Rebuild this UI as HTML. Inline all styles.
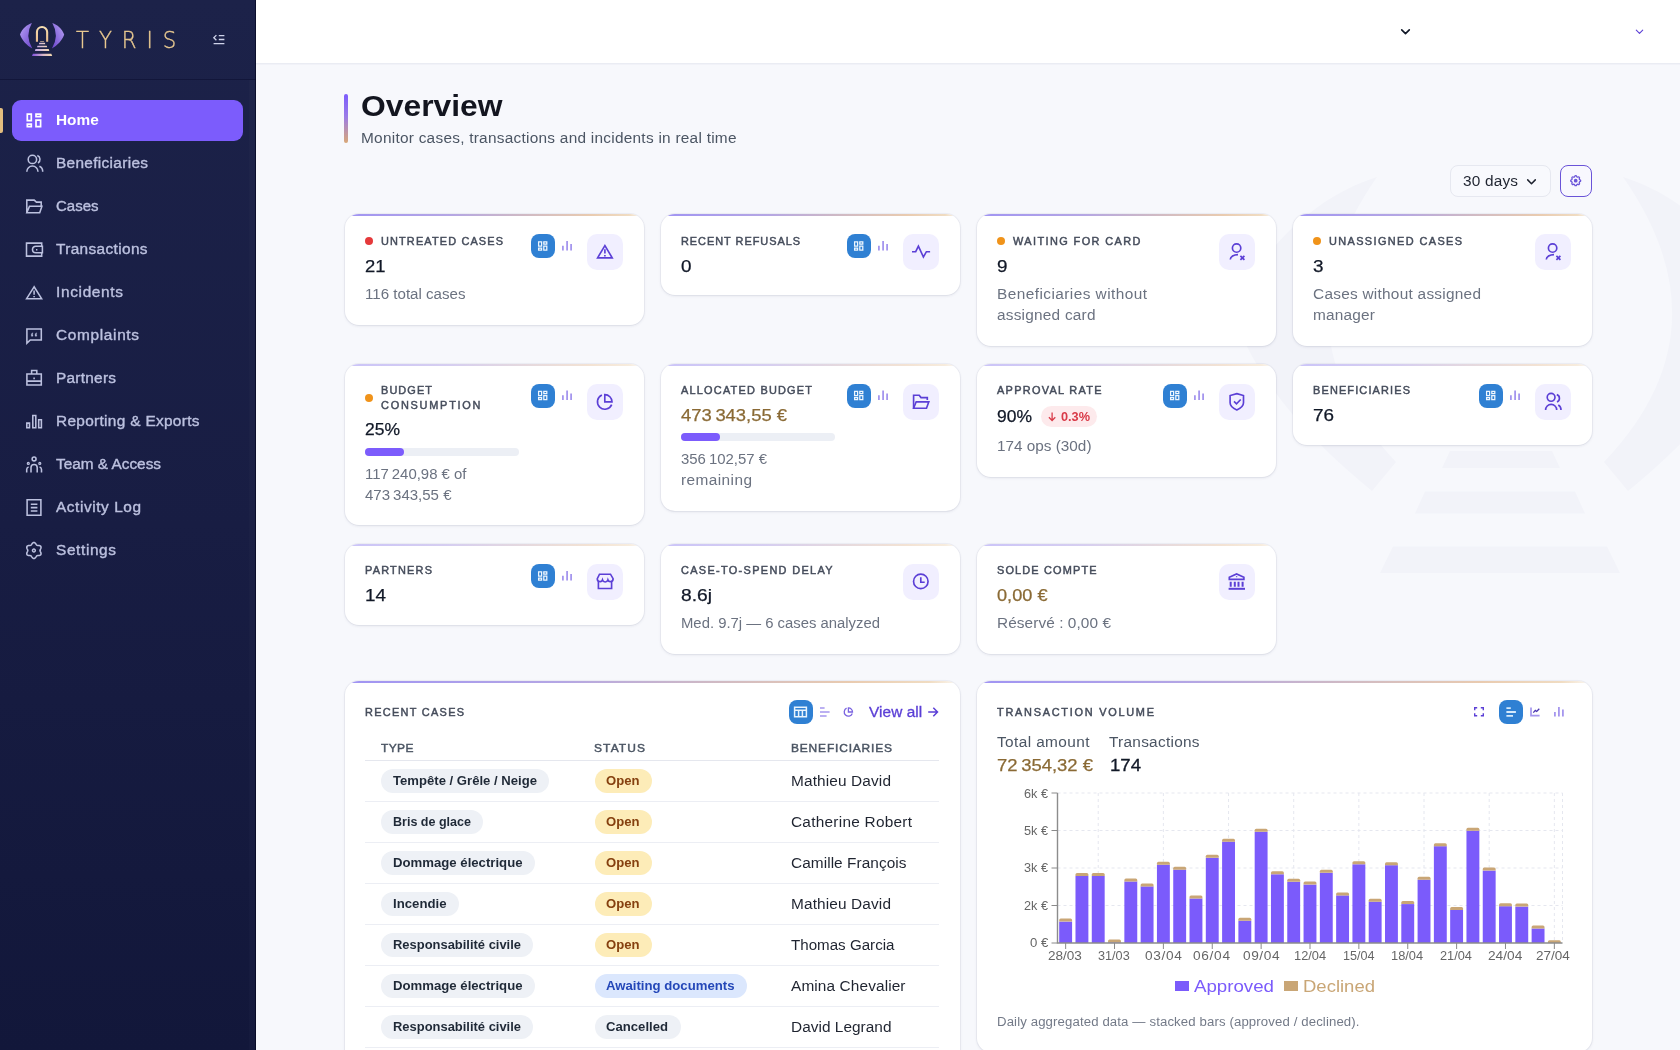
<!DOCTYPE html>
<html lang="en"><head><meta charset="utf-8"><title>Tyris — Overview</title>
<style>
html,body{margin:0;padding:0}
body{width:1680px;height:1050px;overflow:hidden;position:relative;background:#f7f8fc;font-family:"Liberation Sans",sans-serif}
.t{position:absolute;white-space:pre;display:block}
.card{position:absolute;background:#fff;border-radius:14px;overflow:hidden;box-shadow:0 1px 3px rgba(30,35,80,.10),0 0 0 1px rgba(30,35,80,.04)}
.card:before{content:"";position:absolute;left:0;right:0;top:0;height:2px;background:linear-gradient(90deg,#a094f3 0%,#b4a6e4 35%,#cdb8c6 58%,#e9cbb0 82%,#f0dcc2 95%,rgba(240,224,200,.2) 100%)}
.card.dim:before{opacity:.55}
svg{position:absolute;overflow:visible}
#tx{position:absolute;left:0;top:0;width:1680px;height:1050px;will-change:transform}
</style></head><body>
<div style="position:absolute;left:0px;top:0px;width:256px;height:1050px;background:linear-gradient(180deg,#1c2249 0%,#181d43 50%,#12173a 100%)"></div>
<div style="position:absolute;left:0px;top:79px;width:256px;height:1px;background:#12163a"></div>
<div style="position:absolute;left:249px;top:80px;width:6px;height:970px;background:rgba(255,255,255,.014)"></div>
<div style="position:absolute;left:255px;top:0px;width:1px;height:1050px;background:rgba(2,4,26,.6)"></div>
<div style="position:absolute;left:12px;top:100px;width:231px;height:41px;background:#7c5cfc;border-radius:9px"></div>
<div style="position:absolute;left:0px;top:108px;width:3px;height:25px;background:#e2bd7e;border-radius:0 2px 2px 0"></div>
<svg style="left:0;top:0" width="1680" height="1050" viewBox="0 0 1680 1050"><path d="M27.300 114.200h4v6.400h-4z M27.300 124.100h4v2.600h-4z M36 114.200h4.600v2.500h-4.600z M36 120.200h4.600v6.500h-4.600z" fill="none" stroke="#ffffff" stroke-width="1.7" /></svg>
<svg style="left:0;top:0" width="1680" height="1050" viewBox="0 0 1680 1050"><path d="M36.600 159.400a4.200 4.200 0 1 1-8.400 0a4.200 4.200 0 1 1 8.400 0z M26.800 171.700a5.600 5.600 0 0 1 11.200 0 M37.300 155.500a4.200 4.200 0 0 1 0.700 7.500 M39.400 166.300a5.600 5.600 0 0 1 3.300 5.400" fill="none" stroke="#bcc1df" stroke-width="1.55" /></svg>
<svg style="left:0;top:0" width="1680" height="1050" viewBox="0 0 1680 1050"><path d="M26.800 212.800V200.100h7.400l2.200 2h4.800v3.400 M26.800 212.800l2.700-6.500h12.400l-2.200 6.500z" fill="none" stroke="#bcc1df" stroke-width="1.55" /></svg>
<svg style="left:0;top:0" width="1680" height="1050" viewBox="0 0 1680 1050"><path d="M41.700 246v-2.900h-15.200v13h15.200v-2.900 M42.400 246.200h-6.600a3.300 3.300 0 0 0 0 6.600h6.600z" fill="none" stroke="#bcc1df" stroke-width="1.55" /></svg>
<svg style="left:0;top:0" width="1680" height="1050" viewBox="0 0 1680 1050"><path d="M36 249.700h1.400" fill="none" stroke="#bcc1df" stroke-width="1.5" /></svg>
<svg style="left:0;top:0" width="1680" height="1050" viewBox="0 0 1680 1050"><path d="M34.100 286.800L26.600 298.700h15z M34.100 290.600v4.200 M34.100 296v1.300" fill="none" stroke="#bcc1df" stroke-width="1.55" /></svg>
<svg style="left:0;top:0" width="1680" height="1050" viewBox="0 0 1680 1050"><path d="M26.900 328.900h14.400v11h-11l-3.400 3.200z" fill="none" stroke="#bcc1df" stroke-width="1.55" /></svg>
<svg style="left:0;top:0" width="1680" height="1050" viewBox="0 0 1680 1050"><path d="M31.300 336.200v-1.600q0-1.500 1.600-1.900v.9q-.7.300-.7 1h.7v1.600z M35.100 336.200v-1.600q0-1.500 1.600-1.900v.9q-.7.300-.7 1h.7v1.600z" fill="#bcc1df" stroke="#bcc1df" stroke-width="0.3" /></svg>
<svg style="left:0;top:0" width="1680" height="1050" viewBox="0 0 1680 1050"><path d="M26.900 373.900h14.400v11h-14.400z M31.600 373.900v-3.400h5.200v3.400 M26.900 381.100h14.400 M34.100 377.400v1.800" fill="none" stroke="#bcc1df" stroke-width="1.55" /></svg>
<svg style="left:0;top:0" width="1680" height="1050" viewBox="0 0 1680 1050"><path d="M26.800 423.100h2.700v4.700h-2.700z M32.800 415.400h3v12.400h-3z M38.700 419.700h2.700v8.100h-2.700z" fill="none" stroke="#bcc1df" stroke-width="1.55" /></svg>
<svg style="left:0;top:0" width="1680" height="1050" viewBox="0 0 1680 1050"><path d="M36.050 458.900a1.950 1.950 0 1 1-3.900 0a1.950 1.950 0 1 1 3.900 0z M31 472.600v-5a3.100 3.100 0 0 1 6.200 0v5 M26.700 472.600v-3.200a2.600 2.600 0 0 1 1.900-2.500 M41.500 472.600v-3.200a2.600 2.600 0 0 0-1.900-2.500" fill="none" stroke="#bcc1df" stroke-width="1.55" /></svg>
<svg style="left:0;top:0" width="1680" height="1050" viewBox="0 0 1680 1050"><path d="M29.300 463.400a1 1 0 1 1-2 0a1 1 0 1 1 2 0z M40.800 463.400a1 1 0 1 1-2 0a1 1 0 1 1 2 0z" fill="none" stroke="#bcc1df" stroke-width="1.2" /></svg>
<svg style="left:0;top:0" width="1680" height="1050" viewBox="0 0 1680 1050"><path d="M27.100 499.800h13.800v15.400h-13.800z M30.800 504.300h6.600M30.800 507.600h6.600M30.800 511h6.600" fill="none" stroke="#bcc1df" stroke-width="1.55" /></svg>
<svg style="left:0;top:0" width="1680" height="1050" viewBox="0 0 1680 1050"><path d="M40.00 550.50L40.04 550.82L40.15 551.16L40.31 551.52L40.51 551.90L40.71 552.32L40.88 552.77L41.00 553.23L41.04 553.68L40.99 554.11L40.83 554.50L40.57 554.83L40.23 555.10L39.81 555.29L39.36 555.41L38.89 555.49L38.42 555.52L37.99 555.54L37.59 555.58L37.25 555.65L36.95 555.78L36.69 555.98L36.45 556.24L36.23 556.56L35.99 556.93L35.72 557.31L35.43 557.68L35.09 558.01L34.72 558.28L34.32 558.44L33.90 558.50L33.48 558.44L33.08 558.28L32.71 558.01L32.37 557.68L32.08 557.31L31.81 556.93L31.57 556.56L31.35 556.24L31.11 555.98L30.85 555.78L30.55 555.65L30.21 555.58L29.81 555.54L29.38 555.52L28.91 555.49L28.44 555.41L27.99 555.29L27.57 555.10L27.23 554.83L26.97 554.50L26.81 554.11L26.76 553.68L26.80 553.23L26.92 552.77L27.09 552.32L27.29 551.90L27.49 551.52L27.65 551.16L27.76 550.82L27.80 550.50L27.76 550.18L27.65 549.84L27.49 549.48L27.29 549.10L27.09 548.68L26.92 548.23L26.80 547.77L26.76 547.32L26.81 546.89L26.97 546.50L27.23 546.17L27.57 545.90L27.99 545.71L28.44 545.59L28.91 545.51L29.38 545.48L29.81 545.46L30.21 545.42L30.55 545.35L30.85 545.22L31.11 545.02L31.35 544.76L31.57 544.44L31.81 544.07L32.08 543.69L32.37 543.32L32.71 542.99L33.08 542.72L33.48 542.56L33.90 542.50L34.32 542.56L34.72 542.72L35.09 542.99L35.43 543.32L35.72 543.69L35.99 544.07L36.23 544.44L36.45 544.76L36.69 545.02L36.95 545.22L37.25 545.35L37.59 545.42L37.99 545.46L38.42 545.48L38.89 545.51L39.36 545.59L39.81 545.71L40.23 545.90L40.57 546.17L40.83 546.50L40.99 546.89L41.04 547.32L41.00 547.77L40.88 548.23L40.71 548.68L40.51 549.10L40.31 549.48L40.15 549.84L40.04 550.18Z M35.300 550.500a1.400 1.400 0 1 1-2.800 0a1.400 1.400 0 1 1 2.800 0z" fill="none" stroke="#bcc1df" stroke-width="1.55" /></svg>
<svg style="left:0;top:0" width="256" height="80" viewBox="0 0 256 80">
<defs><linearGradient id="lgp" x1="0" y1="0" x2="1" y2="1"><stop offset="0" stop-color="#b9a4f4"/><stop offset="1" stop-color="#6a43cc"/></linearGradient>
<linearGradient id="lgp2" x1="1" y1="0" x2="0" y2="1"><stop offset="0" stop-color="#b9a4f4"/><stop offset="1" stop-color="#6a43cc"/></linearGradient>
<linearGradient id="lgg" x1="0" y1="0" x2="0" y2="1"><stop offset="0" stop-color="#f8e0b2"/><stop offset="1" stop-color="#e9bb8c"/></linearGradient>
<linearGradient id="lgs" x1="0" y1="0" x2="1" y2="0"><stop offset="0" stop-color="#c3a8ee"/><stop offset="1" stop-color="#f7ddb0"/></linearGradient>
<linearGradient id="lgs2" x1="0" y1="0" x2="1" y2="0"><stop offset="0" stop-color="#7f4fe0"/><stop offset=".55" stop-color="#d9b6c8"/><stop offset="1" stop-color="#f7ddb0"/></linearGradient></defs>
<path d="M31.900 23C27 24.500 22 29 20 34.500C22 40.500 27 45.500 32.300 48.500Q24.600 35.500 31.900 23Z" fill="url(#lgp)"/>
<path d="M52.300 23C57.200 24.500 62.200 29 64.200 34.500C62.200 40.500 57.200 45.500 51.900 48.500Q59.600 35.500 52.300 23Z" fill="url(#lgp2)"/>
<path d="M36.950 41.800V32.050A5.100 5.100 0 0 1 47.150 32.050V41.800" fill="none" stroke="url(#lgg)" stroke-width="2.100"/>
<path d="M40.300 41h3.600l.3 1.100h-4.200z" fill="#cdb39a" opacity=".75"/>
<path d="M39.300 42.800h5.600l.4 1.400h-6.400z M37.500 45.800h9.200l.5 1.500h-10.200z M35.500 49h13.200l.6 1.900h-14.400z" fill="url(#lgs)"/>
<path d="M32.900 53.800h18.400l.9 2.300h-20.200z" fill="url(#lgs2)"/></svg>
<svg style="left:0;top:0" width="1680" height="1050" viewBox="0 0 1680 1050"><path d="M218.800 35.700h5.600M218.800 39.500h5.600M213.600 43.700h10.800M216.400 35.100l-2.600 2.600 2.600 2.600" fill="none" stroke="#cfd3ea" stroke-width="1.3" /></svg>
<div style="position:absolute;left:256px;top:0px;width:1424px;height:63px;background:#fff"></div>
<div style="position:absolute;left:256px;top:63px;width:1424px;height:1px;background:#eaecf3"></div>
<div style="position:absolute;left:256px;top:64px;width:1424px;height:1px;background:#f1f2f8"></div>
<svg style="left:1399px;top:25px" width="13" height="13" viewBox="0 0 24 24" fill="none" stroke="#111827" stroke-width="3.0" stroke-linejoin="round" stroke-linecap="round"><path d="M5 9l7 7 7-7"/></svg>
<svg style="left:1634px;top:26px" width="11" height="11" viewBox="0 0 24 24" fill="none" stroke="#5b3fd6" stroke-width="2.4" stroke-linejoin="round" stroke-linecap="round"><path d="M5 9l7 7 7-7"/></svg>
<svg style="left:0;top:0" width="1680" height="1050" viewBox="0 0 1680 1050" fill="#f2f3f9">
<path d="M1377 177C1318 195 1258 249 1234 315C1258 387 1318 447 1372 491L1396 462Q1270 330 1377 177Z"/>
<path d="M1623 177C1682 195 1742 249 1766 315C1742 387 1682 447 1628 491L1604 462Q1730 330 1623 177Z"/>
<path d="M1450 451h102l8 17h-118z M1425 491.500h150l10 22h-170z M1393 546.500h214l13 26.500h-240z"/>
</svg>
<div style="position:absolute;left:344px;top:94px;width:4px;height:49px;border-radius:2px;background:linear-gradient(180deg,#7c5cfc 0%,#9a7be8 45%,#d9a877 100%)"></div>
<div style="position:absolute;left:1450px;top:165px;width:101px;height:32px;box-sizing:border-box;border:1px solid #e6e8f0;border-radius:8px;background:#f8f9fd"></div>
<svg style="left:1525px;top:174.5px" width="13" height="13" viewBox="0 0 24 24" fill="none" stroke="#1f2430" stroke-width="2.8" stroke-linejoin="round" stroke-linecap="round"><path d="M5 9l7 7 7-7"/></svg>
<div style="position:absolute;left:1560px;top:165px;width:32px;height:32px;box-sizing:border-box;border:1px solid #6a54d8;border-radius:8px;background:#f8f8fe"></div>
<svg style="left:1569.3px;top:174.3px" width="13.4" height="13.4" viewBox="0 0 24 24" fill="none" stroke="#6a54d8" stroke-width="2.3" stroke-linejoin="miter" stroke-linecap="butt"><path d="M10.325 4.317c.426-1.756 2.924-1.756 3.35 0a1.724 1.724 0 0 0 2.573 1.066c1.543-.94 3.31.826 2.37 2.37a1.724 1.724 0 0 0 1.065 2.572c1.756.426 1.756 2.924 0 3.35a1.724 1.724 0 0 0-1.066 2.573c.94 1.543-.826 3.31-2.37 2.37a1.724 1.724 0 0 0-2.572 1.065c-.426 1.756-2.924 1.756-3.35 0a1.724 1.724 0 0 0-2.573-1.066c-1.543.94-3.31-.826-2.37-2.37a1.724 1.724 0 0 0-1.065-2.572c-1.756-.426-1.756-2.924 0-3.35a1.724 1.724 0 0 0 1.066-2.573c-.94-1.543.826-3.31 2.37-2.37c1 .608 2.296.07 2.572-1.065z"/><circle cx="12" cy="12" r="2.2" fill="#6a54d8"/></svg>
<div class="card" style="left:344.5px;top:214px;width:299px;height:110.5px"></div>
<div style="position:absolute;left:365px;top:237px;width:8px;height:8px;border-radius:50%;background:#e5393b"></div>
<div style="position:absolute;left:587px;top:234px;width:36px;height:36px;background:#f1efff;border-radius:10px"></div>
<svg style="left:587px;top:234px" width="36" height="36" viewBox="0 0 36 36" fill="none" stroke="#5b3fd6" stroke-width="1.65" stroke-linejoin="miter" stroke-linecap="butt"><path d="M17.9 11.6L10.6 23.8H25.2z"/><path d="M17.9 15.2v4.200M17.900 20.900v1.500"/></svg>
<div style="position:absolute;left:531px;top:234px;width:24px;height:24px;background:#2f80d3;border-radius:8px;box-shadow:0 0 0 3px rgba(255,255,255,.6)"></div>
<svg style="left:0;top:0" width="1680" height="1050" viewBox="0 0 1680 1050"><path d="M538.6 241.8h3v4.200h-3z M538.6 248h3v2.200h-3z M543.8 241.8h3v2.200h-3z M543.8 246h3v4.200h-3z" fill="none" stroke="#eef6fe" stroke-width="1.25" /></svg>
<svg style="left:0;top:0" width="1680" height="1050" viewBox="0 0 1680 1050"><path d="M562.9 250.4V245.7M567.1 250.4V241.1M571.1 250.4V243.9" fill="none" stroke="#a596ee" stroke-width="1.8" /></svg>
<div class="card" style="left:660.5px;top:214px;width:299px;height:80.5px"></div>
<div style="position:absolute;left:903px;top:234px;width:36px;height:36px;background:#f1efff;border-radius:10px"></div>
<svg style="left:903px;top:234px" width="36" height="36" viewBox="0 0 36 36" fill="none" stroke="#5b3fd6" stroke-width="1.65" stroke-linejoin="miter" stroke-linecap="butt"><path d="M9 17.7h3.700l2.700-5.500 5 10.800 3-5.300h3.700"/></svg>
<div style="position:absolute;left:847px;top:234px;width:24px;height:24px;background:#2f80d3;border-radius:8px;box-shadow:0 0 0 3px rgba(255,255,255,.6)"></div>
<svg style="left:0;top:0" width="1680" height="1050" viewBox="0 0 1680 1050"><path d="M854.6 241.8h3v4.200h-3z M854.6 248h3v2.200h-3z M859.8 241.8h3v2.200h-3z M859.8 246h3v4.200h-3z" fill="none" stroke="#eef6fe" stroke-width="1.25" /></svg>
<svg style="left:0;top:0" width="1680" height="1050" viewBox="0 0 1680 1050"><path d="M878.9 250.4V245.7M883.1 250.4V241.1M887.1 250.4V243.9" fill="none" stroke="#a596ee" stroke-width="1.8" /></svg>
<div class="card" style="left:976.5px;top:214px;width:299px;height:131.5px"></div>
<div style="position:absolute;left:997px;top:237px;width:8px;height:8px;border-radius:50%;background:#f0931a"></div>
<div style="position:absolute;left:1219px;top:234px;width:36px;height:36px;background:#f1efff;border-radius:10px"></div>
<svg style="left:1219px;top:234px" width="36" height="36" viewBox="0 0 36 36" fill="none" stroke="#5b3fd6" stroke-width="1.65" stroke-linejoin="miter" stroke-linecap="butt"><circle cx="17.600" cy="14" r="4.200"/><path d="M11.300 25.600A7.600 5 0 0 1 19 20.600"/><path d="M21.400 21.900l4 4M25.400 21.900l-4 4" stroke-width="1.700"/></svg>
<div class="card" style="left:1292.5px;top:214px;width:299px;height:131.5px"></div>
<div style="position:absolute;left:1313px;top:237px;width:8px;height:8px;border-radius:50%;background:#f0931a"></div>
<div style="position:absolute;left:1535px;top:234px;width:36px;height:36px;background:#f1efff;border-radius:10px"></div>
<svg style="left:1535px;top:234px" width="36" height="36" viewBox="0 0 36 36" fill="none" stroke="#5b3fd6" stroke-width="1.65" stroke-linejoin="miter" stroke-linecap="butt"><circle cx="17.600" cy="14" r="4.200"/><path d="M11.300 25.600A7.600 5 0 0 1 19 20.600"/><path d="M21.400 21.900l4 4M25.400 21.900l-4 4" stroke-width="1.700"/></svg>
<div class="card dim" style="left:344.5px;top:364px;width:299px;height:160.5px"></div>
<div style="position:absolute;left:365px;top:394px;width:8px;height:8px;border-radius:50%;background:#f0931a"></div>
<div style="position:absolute;left:587px;top:383.5px;width:36px;height:36px;background:#f1efff;border-radius:10px"></div>
<svg style="left:587px;top:383.5px" width="36" height="36" viewBox="0 0 36 36" fill="none" stroke="#5b3fd6" stroke-width="1.65" stroke-linejoin="miter" stroke-linecap="butt"><path d="M17.8 17.8V10.6A7.2 7.2 0 0 1 25 17.8z"/><path d="M14.9 11A7.4 7.4 0 1 0 24.7 20.600"/></svg>
<div style="position:absolute;left:531px;top:383.5px;width:24px;height:24px;background:#2f80d3;border-radius:8px;box-shadow:0 0 0 3px rgba(255,255,255,.6)"></div>
<svg style="left:0;top:0" width="1680" height="1050" viewBox="0 0 1680 1050"><path d="M538.6 391.3h3v4.200h-3z M538.6 397.5h3v2.200h-3z M543.8 391.3h3v2.200h-3z M543.8 395.5h3v4.200h-3z" fill="none" stroke="#eef6fe" stroke-width="1.25" /></svg>
<svg style="left:0;top:0" width="1680" height="1050" viewBox="0 0 1680 1050"><path d="M562.9 399.9V395.2M567.1 399.9V390.6M571.1 399.9V393.4" fill="none" stroke="#a596ee" stroke-width="1.8" /></svg>
<div style="position:absolute;left:365px;top:448px;width:154px;height:8px;background:#eceff5;border-radius:4px"></div>
<div style="position:absolute;left:365px;top:448px;width:38.5px;height:8px;background:#7c5cfc;border-radius:4px"></div>
<div class="card dim" style="left:660.5px;top:364px;width:299px;height:146.5px"></div>
<div style="position:absolute;left:903px;top:383.5px;width:36px;height:36px;background:#f1efff;border-radius:10px"></div>
<svg style="left:903px;top:383.5px" width="36" height="36" viewBox="0 0 36 36" fill="none" stroke="#5b3fd6" stroke-width="1.65" stroke-linejoin="miter" stroke-linecap="butt"><path d="M10.600 24.200V11.200h5.600l1.800 2.400h6.300v2.400"/><path d="M10.600 24.200l2.600-6.400h12.600l-2.300 6.400z"/></svg>
<div style="position:absolute;left:847px;top:383.5px;width:24px;height:24px;background:#2f80d3;border-radius:8px;box-shadow:0 0 0 3px rgba(255,255,255,.6)"></div>
<svg style="left:0;top:0" width="1680" height="1050" viewBox="0 0 1680 1050"><path d="M854.6 391.3h3v4.200h-3z M854.6 397.5h3v2.200h-3z M859.8 391.3h3v2.200h-3z M859.8 395.5h3v4.200h-3z" fill="none" stroke="#eef6fe" stroke-width="1.25" /></svg>
<svg style="left:0;top:0" width="1680" height="1050" viewBox="0 0 1680 1050"><path d="M878.9 399.9V395.2M883.1 399.9V390.6M887.1 399.9V393.4" fill="none" stroke="#a596ee" stroke-width="1.8" /></svg>
<div style="position:absolute;left:681px;top:433px;width:154px;height:8px;background:#eceff5;border-radius:4px"></div>
<div style="position:absolute;left:681px;top:433px;width:38.5px;height:8px;background:#7c5cfc;border-radius:4px"></div>
<div class="card dim" style="left:976.5px;top:364px;width:299px;height:112.5px"></div>
<div style="position:absolute;left:1219px;top:383.5px;width:36px;height:36px;background:#f1efff;border-radius:10px"></div>
<svg style="left:1219px;top:383.5px" width="36" height="36" viewBox="0 0 36 36" fill="none" stroke="#5b3fd6" stroke-width="1.65" stroke-linejoin="miter" stroke-linecap="butt"><path d="M17.800 9.600l6.700 1.900v7.300c0 3.200-2.700 5.400-6.700 7.100-4-1.700-6.700-3.900-6.700-7.100v-7.300z"/><path d="M15 17.400l2.500 2.500 4.200-4.400"/></svg>
<div style="position:absolute;left:1163px;top:383.5px;width:24px;height:24px;background:#2f80d3;border-radius:8px;box-shadow:0 0 0 3px rgba(255,255,255,.6)"></div>
<svg style="left:0;top:0" width="1680" height="1050" viewBox="0 0 1680 1050"><path d="M1170.6 391.3h3v4.200h-3z M1170.6 397.5h3v2.200h-3z M1175.8 391.3h3v2.200h-3z M1175.8 395.5h3v4.200h-3z" fill="none" stroke="#eef6fe" stroke-width="1.25" /></svg>
<svg style="left:0;top:0" width="1680" height="1050" viewBox="0 0 1680 1050"><path d="M1194.9 399.9V395.2M1199.1 399.9V390.6M1203.1 399.9V393.4" fill="none" stroke="#a596ee" stroke-width="1.8" /></svg>
<div style="position:absolute;left:1041px;top:406px;width:56px;height:21px;background:#fdeaec;border-radius:10.500px"></div>
<svg style="left:0;top:0" width="1680" height="1050" viewBox="0 0 1680 1050"><path d="M1052.1 412.600v7.700 M1048.9 417.300l3.200 3.200 3.200-3.200" fill="none" stroke="#d93a48" stroke-width="1.3" /></svg>
<div class="card dim" style="left:1292.5px;top:364px;width:299px;height:80.5px"></div>
<div style="position:absolute;left:1535px;top:383.5px;width:36px;height:36px;background:#f1efff;border-radius:10px"></div>
<svg style="left:1535px;top:383.5px" width="36" height="36" viewBox="0 0 36 36" fill="none" stroke="#5b3fd6" stroke-width="1.65" stroke-linejoin="miter" stroke-linecap="butt"><circle cx="16.100" cy="13.300" r="3.900"/><path d="M10.600 26a5.550 5.700 0 0 1 11.100 0"/><path d="M21.800 10.600a3.900 3.900 0 0 1 0.200 7.300"/><path d="M23.300 21a5.600 5.600 0 0 1 2.700 5"/></svg>
<div style="position:absolute;left:1479px;top:383.5px;width:24px;height:24px;background:#2f80d3;border-radius:8px;box-shadow:0 0 0 3px rgba(255,255,255,.6)"></div>
<svg style="left:0;top:0" width="1680" height="1050" viewBox="0 0 1680 1050"><path d="M1486.6 391.3h3v4.200h-3z M1486.6 397.5h3v2.200h-3z M1491.8 391.3h3v2.200h-3z M1491.8 395.5h3v4.200h-3z" fill="none" stroke="#eef6fe" stroke-width="1.25" /></svg>
<svg style="left:0;top:0" width="1680" height="1050" viewBox="0 0 1680 1050"><path d="M1510.9 399.9V395.2M1515.1 399.9V390.6M1519.1 399.9V393.4" fill="none" stroke="#a596ee" stroke-width="1.8" /></svg>
<div class="card dim" style="left:344.5px;top:544px;width:299px;height:80.5px"></div>
<div style="position:absolute;left:587px;top:564px;width:36px;height:36px;background:#f1efff;border-radius:10px"></div>
<svg style="left:587px;top:564px" width="36" height="36" viewBox="0 0 36 36" fill="none" stroke="#5b3fd6" stroke-width="1.65" stroke-linejoin="miter" stroke-linecap="butt"><path d="M12.500 10.200h11l2.600 4.500a2.700 2.700 0 0 1-5.200 1.200 2.800 2.800 0 0 1-5.400 0 2.700 2.700 0 0 1-5.200-1.200z"/><path d="M11.400 17.500v7h13.200v-7"/></svg>
<div style="position:absolute;left:531px;top:564px;width:24px;height:24px;background:#2f80d3;border-radius:8px;box-shadow:0 0 0 3px rgba(255,255,255,.6)"></div>
<svg style="left:0;top:0" width="1680" height="1050" viewBox="0 0 1680 1050"><path d="M538.6 571.8h3v4.200h-3z M538.6 578h3v2.200h-3z M543.8 571.8h3v2.200h-3z M543.8 576h3v4.200h-3z" fill="none" stroke="#eef6fe" stroke-width="1.25" /></svg>
<svg style="left:0;top:0" width="1680" height="1050" viewBox="0 0 1680 1050"><path d="M562.9 580.4V575.7M567.1 580.4V571.1M571.1 580.4V573.9" fill="none" stroke="#a596ee" stroke-width="1.8" /></svg>
<div class="card dim" style="left:660.5px;top:544px;width:299px;height:109.5px"></div>
<div style="position:absolute;left:903px;top:564px;width:36px;height:36px;background:#f1efff;border-radius:10px"></div>
<svg style="left:903px;top:564px" width="36" height="36" viewBox="0 0 36 36" fill="none" stroke="#5b3fd6" stroke-width="1.65" stroke-linejoin="miter" stroke-linecap="butt"><circle cx="17.800" cy="17.400" r="7.250"/><path d="M17.800 13.300v4.900h3.900"/></svg>
<div class="card dim" style="left:976.5px;top:544px;width:299px;height:109.5px"></div>
<div style="position:absolute;left:1219px;top:564px;width:36px;height:36px;background:#f1efff;border-radius:10px"></div>
<svg style="left:1219px;top:564px" width="36" height="36" viewBox="0 0 36 36" fill="none" stroke="#5b3fd6" stroke-width="1.65" stroke-linejoin="miter" stroke-linecap="butt"><path d="M10.300 15.300v-2.100l7.300-3.300 7.300 3.300v2.100z"/><path d="M11.700 17.700v5M15.800 17.700v5M19.500 17.700v5M23.600 17.700v5" stroke-width="2"/><path d="M9.600 24.800h16.400" stroke-width="2"/><path d="M17.600 12.200v1" stroke-width="1.300"/></svg>
<div class="card" style="left:344.5px;top:680.5px;width:615px;height:399.5px"></div>
<div style="position:absolute;left:788.5px;top:700px;width:24px;height:24px;background:#2f80d3;border-radius:8px;box-shadow:0 0 0 3px rgba(255,255,255,.6)"></div>
<svg style="left:0;top:0" width="1680" height="1050" viewBox="0 0 1680 1050"><path d="M794.600 707.200h11.800v9.600h-11.800z M794.600 710.200h11.800 M798.600 710.200v6.600 M802.400 710.200v6.600" fill="none" stroke="#e8f3fd" stroke-width="1.5" /></svg>
<svg style="left:0;top:0" width="1680" height="1050" viewBox="0 0 1680 1050"><path d="M820 708h4.600M820 712h9.600M820 716h6.600" fill="none" stroke="#a596ee" stroke-width="1.7" /></svg>
<svg style="left:0;top:0" width="1680" height="1050" viewBox="0 0 1680 1050"><path d="M848.400 712V707.900A4.100 4.100 0 0 1 852.500 712z" fill="none" stroke="#7a63e0" stroke-width="1.3" /></svg>
<svg style="left:0;top:0" width="1680" height="1050" viewBox="0 0 1680 1050"><path d="M846.600 708.200A4.200 4.200 0 1 0 852.300 713.600" fill="none" stroke="#7a63e0" stroke-width="1.3" /></svg>
<svg style="left:0;top:0" width="1680" height="1050" viewBox="0 0 1680 1050"><path d="M928.200 712h9M933.300 707.800l4.200 4.200-4.200 4.200" fill="none" stroke="#5b3fd6" stroke-width="1.5" /></svg>
<div style="position:absolute;left:365px;top:760px;width:574px;height:1px;background:#e5e7ee"></div>
<div style="position:absolute;left:381px;top:769px;width:168px;height:24px;background:#eef1f6;border-radius:12px"></div>
<div style="position:absolute;left:594.5px;top:769px;width:57.5px;height:24px;background:#fdecb8;border-radius:12px"></div>
<div style="position:absolute;left:365px;top:801px;width:574px;height:1px;background:#eceef4"></div>
<div style="position:absolute;left:381px;top:810px;width:102px;height:24px;background:#eef1f6;border-radius:12px"></div>
<div style="position:absolute;left:594.5px;top:810px;width:57.5px;height:24px;background:#fdecb8;border-radius:12px"></div>
<div style="position:absolute;left:365px;top:842px;width:574px;height:1px;background:#eceef4"></div>
<div style="position:absolute;left:381px;top:851px;width:153.5px;height:24px;background:#eef1f6;border-radius:12px"></div>
<div style="position:absolute;left:594.5px;top:851px;width:57.5px;height:24px;background:#fdecb8;border-radius:12px"></div>
<div style="position:absolute;left:365px;top:883px;width:574px;height:1px;background:#eceef4"></div>
<div style="position:absolute;left:381px;top:892px;width:77.5px;height:24px;background:#eef1f6;border-radius:12px"></div>
<div style="position:absolute;left:594.5px;top:892px;width:57.5px;height:24px;background:#fdecb8;border-radius:12px"></div>
<div style="position:absolute;left:365px;top:924px;width:574px;height:1px;background:#eceef4"></div>
<div style="position:absolute;left:381px;top:933px;width:152px;height:24px;background:#eef1f6;border-radius:12px"></div>
<div style="position:absolute;left:594.5px;top:933px;width:57.5px;height:24px;background:#fdecb8;border-radius:12px"></div>
<div style="position:absolute;left:365px;top:965px;width:574px;height:1px;background:#eceef4"></div>
<div style="position:absolute;left:381px;top:974px;width:153.5px;height:24px;background:#eef1f6;border-radius:12px"></div>
<div style="position:absolute;left:594.5px;top:974px;width:152.5px;height:24px;background:#dbe7fd;border-radius:12px"></div>
<div style="position:absolute;left:365px;top:1006px;width:574px;height:1px;background:#eceef4"></div>
<div style="position:absolute;left:381px;top:1015px;width:152px;height:24px;background:#eef1f6;border-radius:12px"></div>
<div style="position:absolute;left:594.5px;top:1015px;width:86px;height:24px;background:#eef1f6;border-radius:12px"></div>
<div style="position:absolute;left:365px;top:1047px;width:574px;height:1px;background:#eceef4"></div>
<div class="card" style="left:976.5px;top:680.5px;width:615px;height:371.5px"></div>
<svg style="left:0;top:0" width="1680" height="1050" viewBox="0 0 1680 1050"><path d="M1474.700 710.300v-2.500h2.500M1480.800 707.800h2.500v2.500M1483.300 713.200v2.500h-2.500M1477.200 715.700h-2.500V713.200" fill="none" stroke="#5b3fd6" stroke-width="1.4" /></svg>
<div style="position:absolute;left:1499px;top:700px;width:24px;height:24px;background:#2f80d3;border-radius:8px;box-shadow:0 0 0 3px rgba(255,255,255,.6)"></div>
<svg style="left:0;top:0" width="1680" height="1050" viewBox="0 0 1680 1050"><path d="M1506.400 708.100h4.400M1506.400 712h9.500M1506.400 715.900h6.600" fill="none" stroke="#d6eafc" stroke-width="1.8" /></svg>
<svg style="left:0;top:0" width="1680" height="1050" viewBox="0 0 1680 1050"><path d="M1531 707.500v8.100h8.600" fill="none" stroke="#a596ee" stroke-width="1.7" /></svg>
<svg style="left:0;top:0" width="1680" height="1050" viewBox="0 0 1680 1050"><path d="M1533.300 712.600l2-2.200 1.400 1.100 2.600-2.700" fill="none" stroke="#4a35b0" stroke-width="1.3" /></svg>
<svg style="left:0;top:0" width="1680" height="1050" viewBox="0 0 1680 1050"><path d="M1554.900 716.400v-4.300M1558.900 716.400v-9.300M1562.900 716.400v-6.800" fill="none" stroke="#a596ee" stroke-width="1.8" /></svg>
<svg style="left:0;top:0" width="1680" height="1050" viewBox="0 0 1680 1050"><path d="M1051.5 943.0H1057.5" stroke="#8a8a8a" stroke-width="1" fill="none"/><path d="M1057.5 905.5H1562.5" stroke="#e5e7ef" stroke-width="1" stroke-dasharray="3 3" fill="none"/><path d="M1051.5 905.5H1057.5" stroke="#8a8a8a" stroke-width="1" fill="none"/><path d="M1057.5 868.0H1562.5" stroke="#e5e7ef" stroke-width="1" stroke-dasharray="3 3" fill="none"/><path d="M1051.5 868.0H1057.5" stroke="#8a8a8a" stroke-width="1" fill="none"/><path d="M1057.5 830.5H1562.5" stroke="#e5e7ef" stroke-width="1" stroke-dasharray="3 3" fill="none"/><path d="M1051.5 830.5H1057.5" stroke="#8a8a8a" stroke-width="1" fill="none"/><path d="M1057.5 793.0H1562.5" stroke="#e5e7ef" stroke-width="1" stroke-dasharray="3 3" fill="none"/><path d="M1051.5 793.0H1057.5" stroke="#8a8a8a" stroke-width="1" fill="none"/><path d="M1098.23 793V943" stroke="#e5e7ef" stroke-width="1" stroke-dasharray="3 3" fill="none"/><path d="M1163.39 793V943" stroke="#e5e7ef" stroke-width="1" stroke-dasharray="3 3" fill="none"/><path d="M1228.55 793V943" stroke="#e5e7ef" stroke-width="1" stroke-dasharray="3 3" fill="none"/><path d="M1293.71 793V943" stroke="#e5e7ef" stroke-width="1" stroke-dasharray="3 3" fill="none"/><path d="M1358.87 793V943" stroke="#e5e7ef" stroke-width="1" stroke-dasharray="3 3" fill="none"/><path d="M1424.03 793V943" stroke="#e5e7ef" stroke-width="1" stroke-dasharray="3 3" fill="none"/><path d="M1489.19 793V943" stroke="#e5e7ef" stroke-width="1" stroke-dasharray="3 3" fill="none"/><path d="M1554.35 793V943" stroke="#e5e7ef" stroke-width="1" stroke-dasharray="3 3" fill="none"/><path d="M1065.65 943v6" stroke="#8a8a8a" stroke-width="1" fill="none"/><path d="M1114.52 943v6" stroke="#8a8a8a" stroke-width="1" fill="none"/><path d="M1163.39 943v6" stroke="#8a8a8a" stroke-width="1" fill="none"/><path d="M1212.26 943v6" stroke="#8a8a8a" stroke-width="1" fill="none"/><path d="M1261.13 943v6" stroke="#8a8a8a" stroke-width="1" fill="none"/><path d="M1310.00 943v6" stroke="#8a8a8a" stroke-width="1" fill="none"/><path d="M1358.87 943v6" stroke="#8a8a8a" stroke-width="1" fill="none"/><path d="M1407.74 943v6" stroke="#8a8a8a" stroke-width="1" fill="none"/><path d="M1456.61 943v6" stroke="#8a8a8a" stroke-width="1" fill="none"/><path d="M1505.48 943v6" stroke="#8a8a8a" stroke-width="1" fill="none"/><path d="M1554.35 943v6" stroke="#8a8a8a" stroke-width="1" fill="none"/><path d="M1562.5 793V943" stroke="#e5e7ef" stroke-width="1" stroke-dasharray="3 3" fill="none"/><rect x="1059.20" y="921.60" width="12.89" height="21.40" fill="#7b5bfb"/><path d="M1059.20 921.60v-1.50q0 -1.500 1.500 -1.500h9.89q1.500 0 1.500 1.500v1.50z" fill="#c9a676"/><rect x="1075.49" y="875.90" width="12.89" height="67.10" fill="#7b5bfb"/><path d="M1075.49 875.90v-1.50q0 -1.500 1.500 -1.500h9.89q1.500 0 1.500 1.500v1.50z" fill="#c9a676"/><rect x="1091.78" y="875.90" width="12.89" height="67.10" fill="#7b5bfb"/><path d="M1091.78 875.90v-1.50q0 -1.500 1.500 -1.500h9.89q1.500 0 1.500 1.500v1.50z" fill="#c9a676"/><rect x="1108.07" y="942.40" width="12.89" height="0.60" fill="#7b5bfb"/><path d="M1108.07 942.40v-1.50q0 -1.500 1.500 -1.500h9.89q1.500 0 1.500 1.500v1.50z" fill="#c9a676"/><rect x="1124.36" y="881.50" width="12.89" height="61.50" fill="#7b5bfb"/><path d="M1124.36 881.50v-1.50q0 -1.500 1.500 -1.500h9.89q1.500 0 1.500 1.500v1.50z" fill="#c9a676"/><rect x="1140.65" y="886.40" width="12.89" height="56.60" fill="#7b5bfb"/><path d="M1140.65 886.40v-1.50q0 -1.500 1.500 -1.500h9.89q1.500 0 1.500 1.500v1.50z" fill="#c9a676"/><rect x="1156.94" y="864.70" width="12.89" height="78.30" fill="#7b5bfb"/><path d="M1156.94 864.70v-1.50q0 -1.500 1.500 -1.500h9.89q1.500 0 1.500 1.500v1.50z" fill="#c9a676"/><rect x="1173.23" y="869.70" width="12.89" height="73.30" fill="#7b5bfb"/><path d="M1173.23 869.70v-1.50q0 -1.500 1.500 -1.500h9.89q1.500 0 1.500 1.500v1.50z" fill="#c9a676"/><rect x="1189.52" y="898.50" width="12.89" height="44.50" fill="#7b5bfb"/><path d="M1189.52 898.50v-1.50q0 -1.500 1.500 -1.500h9.89q1.500 0 1.500 1.500v1.50z" fill="#c9a676"/><rect x="1205.81" y="857.80" width="12.89" height="85.20" fill="#7b5bfb"/><path d="M1205.81 857.80v-1.50q0 -1.500 1.500 -1.500h9.89q1.500 0 1.500 1.500v1.50z" fill="#c9a676"/><rect x="1222.10" y="841.70" width="12.89" height="101.30" fill="#7b5bfb"/><path d="M1222.10 841.70v-1.50q0 -1.500 1.500 -1.500h9.89q1.500 0 1.500 1.500v1.50z" fill="#c9a676"/><rect x="1238.39" y="920.70" width="12.89" height="22.30" fill="#7b5bfb"/><path d="M1238.39 920.70v-1.50q0 -1.500 1.500 -1.500h9.89q1.500 0 1.500 1.500v1.50z" fill="#c9a676"/><rect x="1254.68" y="831.80" width="12.89" height="111.20" fill="#7b5bfb"/><path d="M1254.68 831.80v-1.50q0 -1.500 1.500 -1.500h9.89q1.500 0 1.500 1.500v1.50z" fill="#c9a676"/><rect x="1270.97" y="874.30" width="12.89" height="68.70" fill="#7b5bfb"/><path d="M1270.97 874.30v-1.50q0 -1.500 1.500 -1.500h9.89q1.500 0 1.500 1.500v1.50z" fill="#c9a676"/><rect x="1287.26" y="881.80" width="12.89" height="61.20" fill="#7b5bfb"/><path d="M1287.26 881.80v-1.50q0 -1.500 1.500 -1.500h9.89q1.500 0 1.500 1.500v1.50z" fill="#c9a676"/><rect x="1303.55" y="884.60" width="12.89" height="58.40" fill="#7b5bfb"/><path d="M1303.55 884.60v-1.50q0 -1.500 1.500 -1.500h9.89q1.500 0 1.500 1.500v1.50z" fill="#c9a676"/><rect x="1319.85" y="872.80" width="12.89" height="70.20" fill="#7b5bfb"/><path d="M1319.85 872.80v-1.50q0 -1.500 1.500 -1.500h9.89q1.500 0 1.500 1.500v1.50z" fill="#c9a676"/><rect x="1336.14" y="895.40" width="12.89" height="47.60" fill="#7b5bfb"/><path d="M1336.14 895.40v-1.50q0 -1.500 1.500 -1.500h9.89q1.500 0 1.500 1.500v1.50z" fill="#c9a676"/><rect x="1352.43" y="864.30" width="12.89" height="78.70" fill="#7b5bfb"/><path d="M1352.43 864.30v-1.50q0 -1.500 1.500 -1.500h9.89q1.500 0 1.500 1.500v1.50z" fill="#c9a676"/><rect x="1368.72" y="901.70" width="12.89" height="41.30" fill="#7b5bfb"/><path d="M1368.72 901.70v-1.50q0 -1.500 1.500 -1.500h9.89q1.500 0 1.500 1.500v1.50z" fill="#c9a676"/><rect x="1385.01" y="865.20" width="12.89" height="77.80" fill="#7b5bfb"/><path d="M1385.01 865.20v-1.50q0 -1.500 1.500 -1.500h9.89q1.500 0 1.500 1.500v1.50z" fill="#c9a676"/><rect x="1401.30" y="904.10" width="12.89" height="38.90" fill="#7b5bfb"/><path d="M1401.30 904.10v-1.50q0 -1.500 1.500 -1.500h9.89q1.500 0 1.500 1.500v1.50z" fill="#c9a676"/><rect x="1417.59" y="879.70" width="12.89" height="63.30" fill="#7b5bfb"/><path d="M1417.59 879.70v-1.50q0 -1.500 1.500 -1.500h9.89q1.500 0 1.500 1.500v1.50z" fill="#c9a676"/><rect x="1433.88" y="846.20" width="12.89" height="96.80" fill="#7b5bfb"/><path d="M1433.88 846.20v-1.50q0 -1.500 1.500 -1.500h9.89q1.500 0 1.500 1.500v1.50z" fill="#c9a676"/><rect x="1450.17" y="909.90" width="12.89" height="33.10" fill="#7b5bfb"/><path d="M1450.17 909.90v-1.50q0 -1.500 1.500 -1.500h9.89q1.500 0 1.500 1.500v1.50z" fill="#c9a676"/><rect x="1466.46" y="830.70" width="12.89" height="112.30" fill="#7b5bfb"/><path d="M1466.46 830.70v-1.50q0 -1.500 1.500 -1.500h9.89q1.500 0 1.500 1.500v1.50z" fill="#c9a676"/><rect x="1482.75" y="870.60" width="12.89" height="72.40" fill="#7b5bfb"/><path d="M1482.75 870.60v-1.50q0 -1.500 1.500 -1.500h9.89q1.500 0 1.500 1.500v1.50z" fill="#c9a676"/><rect x="1499.04" y="906.20" width="12.89" height="36.80" fill="#7b5bfb"/><path d="M1499.04 906.20v-1.50q0 -1.500 1.500 -1.500h9.89q1.500 0 1.500 1.500v1.50z" fill="#c9a676"/><rect x="1515.33" y="906.60" width="12.89" height="36.40" fill="#7b5bfb"/><path d="M1515.33 906.60v-1.50q0 -1.500 1.500 -1.500h9.89q1.500 0 1.500 1.500v1.50z" fill="#c9a676"/><rect x="1531.62" y="928.50" width="12.89" height="14.50" fill="#7b5bfb"/><path d="M1531.62 928.50v-1.50q0 -1.500 1.500 -1.500h9.89q1.500 0 1.500 1.500v1.50z" fill="#c9a676"/><rect x="1547.91" y="943.00" width="12.89" height="0.00" fill="#7b5bfb"/><path d="M1547.91 943.00v-1.20q0 -1.500 1.500 -1.500h9.89q1.500 0 1.500 1.500v1.20z" fill="#c9a676"/><path d="M1057.5 793V943H1562.5" stroke="#8c8c8c" stroke-width="1.400" fill="none"/></svg>
<div style="position:absolute;left:1175px;top:981.2px;width:14px;height:10px;background:#7b5bfb"></div>
<div style="position:absolute;left:1284px;top:981.2px;width:14px;height:10px;background:#c9a676"></div>
<div id="tx">
<span class="t" style="left:56.00px;top:112px;font-size:14px;line-height:16.80px;font-weight:700;color:#ffffff;letter-spacing:0.001px;transform:scaleX(1.1000);transform-origin:0 0;">Home</span>
<span class="t" style="left:55.90px;top:155px;font-size:14px;line-height:16.80px;font-weight:400;color:#bcc1df;letter-spacing:0.290px;transform:scaleX(1.1000);transform-origin:0 0;-webkit-text-stroke:0.35px #bcc1df;">Beneficiaries</span>
<span class="t" style="left:55.90px;top:198px;font-size:14px;line-height:16.80px;font-weight:400;color:#bcc1df;letter-spacing:-0.000px;transform:scaleX(1.0709);transform-origin:0 0;-webkit-text-stroke:0.35px #bcc1df;">Cases</span>
<span class="t" style="left:55.90px;top:241px;font-size:14px;line-height:16.80px;font-weight:400;color:#bcc1df;letter-spacing:0.323px;transform:scaleX(1.1000);transform-origin:0 0;-webkit-text-stroke:0.35px #bcc1df;">Transactions</span>
<span class="t" style="left:55.90px;top:284px;font-size:14px;line-height:16.80px;font-weight:400;color:#bcc1df;letter-spacing:0.608px;transform:scaleX(1.1000);transform-origin:0 0;-webkit-text-stroke:0.35px #bcc1df;">Incidents</span>
<span class="t" style="left:55.90px;top:327px;font-size:14px;line-height:16.80px;font-weight:400;color:#bcc1df;letter-spacing:0.603px;transform:scaleX(1.1000);transform-origin:0 0;-webkit-text-stroke:0.35px #bcc1df;">Complaints</span>
<span class="t" style="left:55.90px;top:370px;font-size:14px;line-height:16.80px;font-weight:400;color:#bcc1df;letter-spacing:0.232px;transform:scaleX(1.1000);transform-origin:0 0;-webkit-text-stroke:0.35px #bcc1df;">Partners</span>
<span class="t" style="left:55.90px;top:413px;font-size:14px;line-height:16.80px;font-weight:400;color:#bcc1df;letter-spacing:0.287px;transform:scaleX(1.1000);transform-origin:0 0;-webkit-text-stroke:0.35px #bcc1df;">Reporting &amp; Exports</span>
<span class="t" style="left:55.90px;top:456px;font-size:14px;line-height:16.80px;font-weight:400;color:#bcc1df;transform:scaleX(1.0971);transform-origin:0 0;-webkit-text-stroke:0.35px #bcc1df;">Team &amp; Access</span>
<span class="t" style="left:55.90px;top:499px;font-size:14px;line-height:16.80px;font-weight:400;color:#bcc1df;letter-spacing:0.516px;transform:scaleX(1.1000);transform-origin:0 0;-webkit-text-stroke:0.35px #bcc1df;">Activity Log</span>
<span class="t" style="left:55.90px;top:542px;font-size:14px;line-height:16.80px;font-weight:400;color:#bcc1df;letter-spacing:0.565px;transform:scaleX(1.1000);transform-origin:0 0;-webkit-text-stroke:0.35px #bcc1df;">Settings</span>
<span class="t" style="left:76.30px;top:26px;font-size:23.6px;line-height:28.32px;font-weight:200;color:#e8c890;letter-spacing:11.072px;font-family:&quot;DejaVu Sans Light&quot;,&quot;DejaVu Sans&quot;,&quot;Liberation Sans&quot;,sans-serif;transform:scaleX(0.9000);transform-origin:0 0;-webkit-text-stroke:0.35px #e8c890;">TYRIS</span>
<span class="t" style="left:361.00px;top:89px;font-size:29px;line-height:34.80px;font-weight:700;color:#13151f;transform:scaleX(1.0970);transform-origin:0 0;">Overview</span>
<span class="t" style="left:361.00px;top:130px;font-size:14px;line-height:16.80px;font-weight:400;color:#4b5563;letter-spacing:0.230px;transform:scaleX(1.1000);transform-origin:0 0;">Monitor cases, transactions and incidents in real time</span>
<span class="t" style="left:1463.00px;top:173px;font-size:14px;line-height:16.80px;font-weight:400;color:#1f2430;letter-spacing:0.159px;transform:scaleX(1.1000);transform-origin:0 0;">30 days</span>
<span class="t" style="left:381.00px;top:235px;font-size:10.5px;line-height:12.60px;font-weight:400;color:#454c5b;letter-spacing:1.100px;transform:scaleX(1.0400);transform-origin:0 0;-webkit-text-stroke:0.45px #454c5b;">UNTREATED CASES</span>
<span class="t" style="left:365.00px;top:257px;font-size:16.6px;line-height:19.92px;font-weight:400;color:#111827;transform:scaleX(1.1100);transform-origin:0 0;-webkit-text-stroke:0.25px #111827;">21</span>
<span class="t" style="left:365.00px;top:286px;font-size:14px;line-height:16.80px;font-weight:400;color:#6b7280;transform:scaleX(1.0790);transform-origin:0 0;">116 total cases</span>
<span class="t" style="left:681.00px;top:235px;font-size:10.5px;line-height:12.60px;font-weight:400;color:#454c5b;letter-spacing:0.934px;transform:scaleX(1.0400);transform-origin:0 0;-webkit-text-stroke:0.45px #454c5b;">RECENT REFUSALS</span>
<span class="t" style="left:681.00px;top:257px;font-size:16.6px;line-height:19.92px;font-weight:400;color:#111827;transform:scaleX(1.1371);transform-origin:0 0;-webkit-text-stroke:0.25px #111827;">0</span>
<span class="t" style="left:1013.00px;top:235px;font-size:10.5px;line-height:12.60px;font-weight:400;color:#454c5b;letter-spacing:1.354px;transform:scaleX(1.0400);transform-origin:0 0;-webkit-text-stroke:0.45px #454c5b;">WAITING FOR CARD</span>
<span class="t" style="left:997.00px;top:257px;font-size:16.6px;line-height:19.92px;font-weight:400;color:#111827;transform:scaleX(1.1371);transform-origin:0 0;-webkit-text-stroke:0.25px #111827;">9</span>
<span class="t" style="left:997.00px;top:286px;font-size:14px;line-height:16.80px;font-weight:400;color:#6b7280;letter-spacing:0.398px;transform:scaleX(1.1000);transform-origin:0 0;">Beneficiaries without</span>
<span class="t" style="left:997.00px;top:307px;font-size:14px;line-height:16.80px;font-weight:400;color:#6b7280;letter-spacing:0.198px;transform:scaleX(1.1000);transform-origin:0 0;">assigned card</span>
<span class="t" style="left:1329.00px;top:235px;font-size:10.5px;line-height:12.60px;font-weight:400;color:#454c5b;letter-spacing:1.329px;transform:scaleX(1.0400);transform-origin:0 0;-webkit-text-stroke:0.45px #454c5b;">UNASSIGNED CASES</span>
<span class="t" style="left:1313.00px;top:257px;font-size:16.6px;line-height:19.92px;font-weight:400;color:#111827;transform:scaleX(1.1371);transform-origin:0 0;-webkit-text-stroke:0.25px #111827;">3</span>
<span class="t" style="left:1313.00px;top:286px;font-size:14px;line-height:16.80px;font-weight:400;color:#6b7280;letter-spacing:0.231px;transform:scaleX(1.1000);transform-origin:0 0;">Cases without assigned</span>
<span class="t" style="left:1313.00px;top:307px;font-size:14px;line-height:16.80px;font-weight:400;color:#6b7280;letter-spacing:0.183px;transform:scaleX(1.1000);transform-origin:0 0;">manager</span>
<span class="t" style="left:381.00px;top:384px;font-size:10.5px;line-height:12.60px;font-weight:400;color:#454c5b;letter-spacing:1.055px;transform:scaleX(1.0400);transform-origin:0 0;-webkit-text-stroke:0.45px #454c5b;">BUDGET</span>
<span class="t" style="left:381.00px;top:399px;font-size:10.5px;line-height:12.60px;font-weight:400;color:#454c5b;letter-spacing:1.692px;transform:scaleX(1.0400);transform-origin:0 0;-webkit-text-stroke:0.45px #454c5b;">CONSUMPTION</span>
<span class="t" style="left:365.00px;top:420px;font-size:16.6px;line-height:19.92px;font-weight:400;color:#111827;transform:scaleX(1.0536);transform-origin:0 0;-webkit-text-stroke:0.25px #111827;">25%</span>
<span class="t" style="left:365.00px;top:466px;font-size:14px;line-height:16.80px;font-weight:400;color:#6b7280;transform:scaleX(1.0663);transform-origin:0 0;">117 240,98 € of</span>
<span class="t" style="left:365.00px;top:487px;font-size:14px;line-height:16.80px;font-weight:400;color:#6b7280;transform:scaleX(1.0722);transform-origin:0 0;">473 343,55 €</span>
<span class="t" style="left:681.00px;top:384px;font-size:10.5px;line-height:12.60px;font-weight:400;color:#454c5b;letter-spacing:1.176px;transform:scaleX(1.0400);transform-origin:0 0;-webkit-text-stroke:0.45px #454c5b;">ALLOCATED BUDGET</span>
<span class="t" style="left:681.00px;top:406px;font-size:16.6px;line-height:19.92px;font-weight:400;color:#8a6a35;transform:scaleX(1.1087);transform-origin:0 0;-webkit-text-stroke:0.25px #8a6a35;">473 343,55 €</span>
<span class="t" style="left:681.00px;top:451px;font-size:14px;line-height:16.80px;font-weight:400;color:#6b7280;transform:scaleX(1.0660);transform-origin:0 0;">356 102,57 €</span>
<span class="t" style="left:681.00px;top:472px;font-size:14px;line-height:16.80px;font-weight:400;color:#6b7280;letter-spacing:0.383px;transform:scaleX(1.1000);transform-origin:0 0;">remaining</span>
<span class="t" style="left:997.00px;top:384px;font-size:10.5px;line-height:12.60px;font-weight:400;color:#454c5b;letter-spacing:1.241px;transform:scaleX(1.0400);transform-origin:0 0;-webkit-text-stroke:0.45px #454c5b;">APPROVAL RATE</span>
<span class="t" style="left:997.00px;top:407px;font-size:16.6px;line-height:19.92px;font-weight:400;color:#111827;transform:scaleX(1.0536);transform-origin:0 0;-webkit-text-stroke:0.25px #111827;">90%</span>
<span class="t" style="left:1061.00px;top:410px;font-size:12px;line-height:14.40px;font-weight:700;color:#d93a48;letter-spacing:-0.000px;transform:scaleX(1.0600);transform-origin:0 0;">0.3%</span>
<span class="t" style="left:997.00px;top:438px;font-size:14px;line-height:16.80px;font-weight:400;color:#6b7280;transform:scaleX(1.0937);transform-origin:0 0;">174 ops (30d)</span>
<span class="t" style="left:1313.00px;top:384px;font-size:10.5px;line-height:12.60px;font-weight:400;color:#454c5b;letter-spacing:1.111px;transform:scaleX(1.0400);transform-origin:0 0;-webkit-text-stroke:0.45px #454c5b;">BENEFICIARIES</span>
<span class="t" style="left:1313.00px;top:406px;font-size:16.6px;line-height:19.92px;font-weight:400;color:#111827;transform:scaleX(1.1371);transform-origin:0 0;-webkit-text-stroke:0.25px #111827;">76</span>
<span class="t" style="left:365.00px;top:564px;font-size:10.5px;line-height:12.60px;font-weight:400;color:#454c5b;letter-spacing:1.172px;transform:scaleX(1.0400);transform-origin:0 0;-webkit-text-stroke:0.45px #454c5b;">PARTNERS</span>
<span class="t" style="left:365.00px;top:586px;font-size:16.6px;line-height:19.92px;font-weight:400;color:#111827;transform:scaleX(1.1371);transform-origin:0 0;-webkit-text-stroke:0.25px #111827;">14</span>
<span class="t" style="left:681.00px;top:564px;font-size:10.5px;line-height:12.60px;font-weight:400;color:#454c5b;letter-spacing:1.274px;transform:scaleX(1.0400);transform-origin:0 0;-webkit-text-stroke:0.45px #454c5b;">CASE-TO-SPEND DELAY</span>
<span class="t" style="left:681.00px;top:586px;font-size:16.6px;line-height:19.92px;font-weight:400;color:#111827;transform:scaleX(1.1582);transform-origin:0 0;-webkit-text-stroke:0.25px #111827;">8.6j</span>
<span class="t" style="left:681.00px;top:615px;font-size:14px;line-height:16.80px;font-weight:400;color:#6b7280;transform:scaleX(1.0611);transform-origin:0 0;">Med. 9.7j — 6 cases analyzed</span>
<span class="t" style="left:997.00px;top:564px;font-size:10.5px;line-height:12.60px;font-weight:400;color:#454c5b;letter-spacing:1.112px;transform:scaleX(1.0400);transform-origin:0 0;-webkit-text-stroke:0.45px #454c5b;">SOLDE COMPTE</span>
<span class="t" style="left:997.00px;top:586px;font-size:16.6px;line-height:19.92px;font-weight:400;color:#8a6a35;transform:scaleX(1.0945);transform-origin:0 0;-webkit-text-stroke:0.25px #8a6a35;">0,00 €</span>
<span class="t" style="left:997.00px;top:615px;font-size:14px;line-height:16.80px;font-weight:400;color:#6b7280;letter-spacing:0.060px;transform:scaleX(1.1000);transform-origin:0 0;">Réservé : 0,00 €</span>
<span class="t" style="left:365.00px;top:706px;font-size:10.5px;line-height:12.60px;font-weight:400;color:#454c5b;letter-spacing:1.245px;transform:scaleX(1.0400);transform-origin:0 0;-webkit-text-stroke:0.45px #454c5b;">RECENT CASES</span>
<span class="t" style="left:869.00px;top:704px;font-size:14px;line-height:16.80px;font-weight:400;color:#5b3fd6;letter-spacing:0.065px;transform:scaleX(1.1000);transform-origin:0 0;-webkit-text-stroke:0.3px #5b3fd6;">View all</span>
<span class="t" style="left:381.00px;top:742px;font-size:11.5px;line-height:13.80px;font-weight:400;color:#4b5563;letter-spacing:0.401px;transform:scaleX(1.0400);transform-origin:0 0;-webkit-text-stroke:0.45px #4b5563;">TYPE</span>
<span class="t" style="left:593.90px;top:742px;font-size:11.5px;line-height:13.80px;font-weight:400;color:#4b5563;letter-spacing:1.073px;transform:scaleX(1.0400);transform-origin:0 0;-webkit-text-stroke:0.45px #4b5563;">STATUS</span>
<span class="t" style="left:790.50px;top:742px;font-size:11.5px;line-height:13.80px;font-weight:400;color:#4b5563;letter-spacing:0.796px;transform:scaleX(1.0400);transform-origin:0 0;-webkit-text-stroke:0.45px #4b5563;">BENEFICIARIES</span>
<span class="t" style="left:393.00px;top:773px;font-size:13px;line-height:15.60px;font-weight:700;color:#1f2937;transform:scaleX(1.0083);transform-origin:0 0;">Tempête / Grêle / Neige</span>
<span class="t" style="left:606.00px;top:773px;font-size:13px;line-height:15.60px;font-weight:700;color:#85400f;transform:scaleX(1.0080);transform-origin:0 0;">Open</span>
<span class="t" style="left:790.90px;top:773px;font-size:14px;line-height:16.80px;font-weight:400;color:#1f2430;letter-spacing:0.117px;transform:scaleX(1.1000);transform-origin:0 0;">Mathieu David</span>
<span class="t" style="left:393.00px;top:814px;font-size:13px;line-height:15.60px;font-weight:700;color:#1f2937;transform:scaleX(0.9637);transform-origin:0 0;">Bris de glace</span>
<span class="t" style="left:606.00px;top:814px;font-size:13px;line-height:15.60px;font-weight:700;color:#85400f;transform:scaleX(1.0080);transform-origin:0 0;">Open</span>
<span class="t" style="left:790.90px;top:814px;font-size:14px;line-height:16.80px;font-weight:400;color:#1f2430;letter-spacing:0.225px;transform:scaleX(1.1000);transform-origin:0 0;">Catherine Robert</span>
<span class="t" style="left:393.00px;top:855px;font-size:13px;line-height:15.60px;font-weight:700;color:#1f2937;transform:scaleX(1.0127);transform-origin:0 0;">Dommage électrique</span>
<span class="t" style="left:606.00px;top:855px;font-size:13px;line-height:15.60px;font-weight:700;color:#85400f;transform:scaleX(1.0080);transform-origin:0 0;">Open</span>
<span class="t" style="left:790.90px;top:855px;font-size:14px;line-height:16.80px;font-weight:400;color:#1f2430;letter-spacing:0.050px;transform:scaleX(1.1000);transform-origin:0 0;">Camille François</span>
<span class="t" style="left:393.00px;top:896px;font-size:13px;line-height:15.60px;font-weight:700;color:#1f2937;transform:scaleX(1.0142);transform-origin:0 0;">Incendie</span>
<span class="t" style="left:606.00px;top:896px;font-size:13px;line-height:15.60px;font-weight:700;color:#85400f;transform:scaleX(1.0080);transform-origin:0 0;">Open</span>
<span class="t" style="left:790.90px;top:896px;font-size:14px;line-height:16.80px;font-weight:400;color:#1f2430;letter-spacing:0.117px;transform:scaleX(1.1000);transform-origin:0 0;">Mathieu David</span>
<span class="t" style="left:393.00px;top:937px;font-size:13px;line-height:15.60px;font-weight:700;color:#1f2937;transform:scaleX(0.9953);transform-origin:0 0;">Responsabilité civile</span>
<span class="t" style="left:606.00px;top:937px;font-size:13px;line-height:15.60px;font-weight:700;color:#85400f;transform:scaleX(1.0080);transform-origin:0 0;">Open</span>
<span class="t" style="left:790.90px;top:937px;font-size:14px;line-height:16.80px;font-weight:400;color:#1f2430;transform:scaleX(1.0815);transform-origin:0 0;">Thomas Garcia</span>
<span class="t" style="left:393.00px;top:978px;font-size:13px;line-height:15.60px;font-weight:700;color:#1f2937;transform:scaleX(1.0127);transform-origin:0 0;">Dommage électrique</span>
<span class="t" style="left:606.00px;top:978px;font-size:13px;line-height:15.60px;font-weight:700;color:#2447b8;letter-spacing:-0.000px;transform:scaleX(1.0127);transform-origin:0 0;">Awaiting documents</span>
<span class="t" style="left:790.90px;top:978px;font-size:14px;line-height:16.80px;font-weight:400;color:#1f2430;letter-spacing:0.098px;transform:scaleX(1.1000);transform-origin:0 0;">Amina Chevalier</span>
<span class="t" style="left:393.00px;top:1019px;font-size:13px;line-height:15.60px;font-weight:700;color:#1f2937;transform:scaleX(0.9953);transform-origin:0 0;">Responsabilité civile</span>
<span class="t" style="left:606.00px;top:1019px;font-size:13px;line-height:15.60px;font-weight:700;color:#1f2937;letter-spacing:-0.000px;transform:scaleX(1.0094);transform-origin:0 0;">Cancelled</span>
<span class="t" style="left:790.90px;top:1019px;font-size:14px;line-height:16.80px;font-weight:400;color:#1f2430;letter-spacing:0.025px;transform:scaleX(1.1000);transform-origin:0 0;">David Legrand</span>
<span class="t" style="left:997.00px;top:706px;font-size:10.5px;line-height:12.60px;font-weight:400;color:#454c5b;letter-spacing:1.673px;transform:scaleX(1.0400);transform-origin:0 0;-webkit-text-stroke:0.45px #454c5b;">TRANSACTION VOLUME</span>
<span class="t" style="left:997.00px;top:734px;font-size:14px;line-height:16.80px;font-weight:400;color:#4b5563;letter-spacing:0.356px;transform:scaleX(1.1000);transform-origin:0 0;">Total amount</span>
<span class="t" style="left:1108.70px;top:734px;font-size:14px;line-height:16.80px;font-weight:400;color:#4b5563;letter-spacing:0.241px;transform:scaleX(1.1000);transform-origin:0 0;">Transactions</span>
<span class="t" style="left:996.70px;top:756px;font-size:16.6px;line-height:19.92px;font-weight:400;color:#8a6a35;transform:scaleX(1.1114);transform-origin:0 0;-webkit-text-stroke:0.25px #8a6a35;">72 354,32 €</span>
<span class="t" style="left:1110.00px;top:756px;font-size:16.6px;line-height:19.92px;font-weight:400;color:#111827;transform:scaleX(1.1196);transform-origin:0 0;-webkit-text-stroke:0.3px #111827;">174</span>
<span class="t" style="left:1030.00px;top:936px;font-size:12px;line-height:14.40px;font-weight:400;color:#666666;transform:scaleX(1.0966);transform-origin:0 0;">0 €</span>
<span class="t" style="left:1024.30px;top:899px;font-size:12px;line-height:14.40px;font-weight:400;color:#666666;transform:scaleX(1.0579);transform-origin:0 0;">2k €</span>
<span class="t" style="left:1024.30px;top:861px;font-size:12px;line-height:14.40px;font-weight:400;color:#666666;transform:scaleX(1.0579);transform-origin:0 0;">3k €</span>
<span class="t" style="left:1024.30px;top:824px;font-size:12px;line-height:14.40px;font-weight:400;color:#666666;transform:scaleX(1.0579);transform-origin:0 0;">5k €</span>
<span class="t" style="left:1024.30px;top:787px;font-size:12px;line-height:14.40px;font-weight:400;color:#666666;transform:scaleX(1.0579);transform-origin:0 0;">6k €</span>
<span class="t" style="left:1048.40px;top:949px;font-size:12px;line-height:14.40px;font-weight:400;color:#666666;letter-spacing:-0.000px;transform:scaleX(1.1288);transform-origin:0 0;">28/03</span>
<span class="t" style="left:1098.37px;top:949px;font-size:12px;line-height:14.40px;font-weight:400;color:#666666;transform:scaleX(1.0556);transform-origin:0 0;">31/03</span>
<span class="t" style="left:1144.69px;top:949px;font-size:12px;line-height:14.40px;font-weight:400;color:#666666;letter-spacing:0.562px;transform:scaleX(1.1400);transform-origin:0 0;">03/04</span>
<span class="t" style="left:1193.46px;top:949px;font-size:12px;line-height:14.40px;font-weight:400;color:#666666;letter-spacing:0.606px;transform:scaleX(1.1400);transform-origin:0 0;">06/04</span>
<span class="t" style="left:1242.58px;top:949px;font-size:12px;line-height:14.40px;font-weight:400;color:#666666;letter-spacing:0.497px;transform:scaleX(1.1400);transform-origin:0 0;">09/04</span>
<span class="t" style="left:1293.65px;top:949px;font-size:12px;line-height:14.40px;font-weight:400;color:#666666;letter-spacing:0.000px;transform:scaleX(1.0689);transform-origin:0 0;">12/04</span>
<span class="t" style="left:1342.82px;top:949px;font-size:12px;line-height:14.40px;font-weight:400;color:#666666;transform:scaleX(1.0489);transform-origin:0 0;">15/04</span>
<span class="t" style="left:1391.39px;top:949px;font-size:12px;line-height:14.40px;font-weight:400;color:#666666;letter-spacing:0.000px;transform:scaleX(1.0689);transform-origin:0 0;">18/04</span>
<span class="t" style="left:1440.36px;top:949px;font-size:12px;line-height:14.40px;font-weight:400;color:#666666;transform:scaleX(1.0622);transform-origin:0 0;">21/04</span>
<span class="t" style="left:1488.03px;top:949px;font-size:12px;line-height:14.40px;font-weight:400;color:#666666;letter-spacing:0.014px;transform:scaleX(1.1400);transform-origin:0 0;">24/04</span>
<span class="t" style="left:1535.95px;top:949px;font-size:12px;line-height:14.40px;font-weight:400;color:#666666;transform:scaleX(1.1255);transform-origin:0 0;">27/04</span>
<span class="t" style="left:1193.50px;top:977px;font-size:17px;line-height:20.40px;font-weight:400;color:#7b5bfb;transform:scaleX(1.0992);transform-origin:0 0;">Approved</span>
<span class="t" style="left:1302.50px;top:977px;font-size:17px;line-height:20.40px;font-weight:400;color:#c9a676;transform:scaleX(1.0883);transform-origin:0 0;">Declined</span>
<span class="t" style="left:996.90px;top:1015px;font-size:12px;line-height:14.40px;font-weight:400;color:#737a88;letter-spacing:0.104px;transform:scaleX(1.1000);transform-origin:0 0;">Daily aggregated data — stacked bars (approved / declined).</span>
</div>
</body></html>
